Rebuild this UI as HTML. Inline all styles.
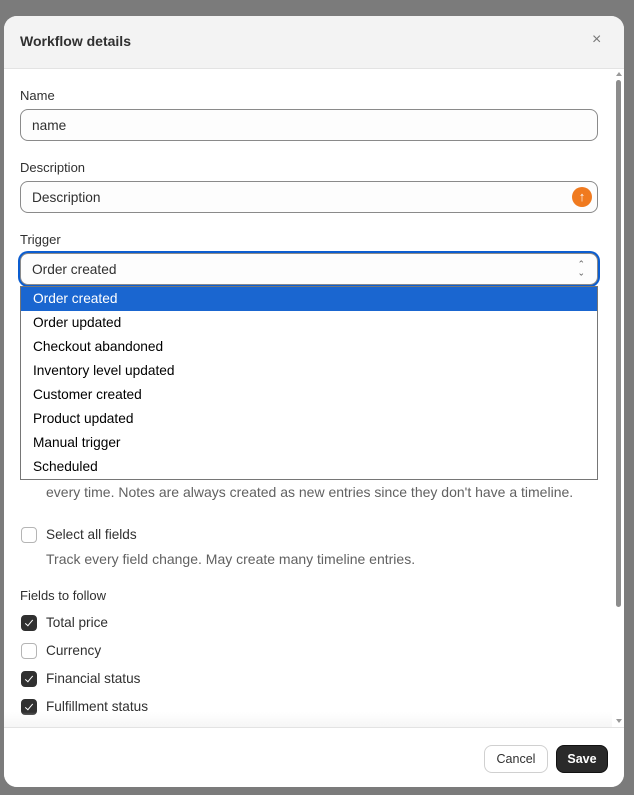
<!DOCTYPE html>
<html><head><style>
*{box-sizing:border-box;margin:0;padding:0}
body{width:634px;height:795px;background:#7b7b7b;font-family:"Liberation Sans",sans-serif;position:relative;overflow:hidden;font-size:13px;color:#303030}
.modal{position:absolute;left:4px;top:16px;width:620px;height:771px;background:#fff;border-radius:13px;overflow:hidden}
.hdr{height:53px;background:#f3f3f3;border-bottom:1px solid #e3e3e3;position:relative}
.hdr h1{position:absolute;left:16px;top:17px;font-size:14px;font-weight:bold;color:#303030}
.x{position:absolute;left:588px;top:15px;font-size:16px;color:#777}
.lbl{position:absolute;left:16px;font-size:13px;color:#303030}
.inp{position:absolute;left:16px;width:578px;height:32px;border:1px solid #8a8a8a;border-radius:8px;background:#fdfdfd;padding:8px 11px;font-size:13.7px}
.dd{position:absolute;left:16px;top:270px;width:578px;height:194px;border:1px solid #767676;background:#fff}
.dd div{height:24px;line-height:24px;padding-left:12px;font-size:13.7px;color:#000}
.dd .sel{background:#1a66d0;color:#fff}
.cb{position:absolute;left:17px;width:16px;height:16px;border:1px solid #b5b5b5;border-radius:4px;background:#fff}
.cb.on{background:#303030;border-color:#303030}
.cb.on::after{content:"";position:absolute;left:5px;top:2px;width:3px;height:7px;border:solid #fff;border-width:0 1.6px 1.6px 0;transform:rotate(40deg)}
.t{position:absolute;left:42px;font-size:13.6px;color:#303030}
.g{color:#616161;font-size:14px}
.foot{position:absolute;left:0;top:711px;width:620px;height:60px;border-top:1px solid #e3e3e3;background:#fff}
.fade{position:absolute;left:0;top:696px;width:608px;height:15px;background:linear-gradient(rgba(255,255,255,0),#f6f6f6)}
.btn{position:absolute;top:17px;height:28px;border-radius:8px;font-size:12.5px;line-height:26px;text-align:center}
.sb{position:absolute;left:610px;top:53px;width:10px;height:658px;background:#fff}
.thumb{position:absolute;left:2px;top:11px;width:5px;height:527px;background:#8c8c8c;border-radius:3px}
.ar{position:absolute;left:2px;width:0;height:0;border-left:3px solid transparent;border-right:3px solid transparent}
</style></head><body>
<div class="modal">
<div class="hdr"><h1>Workflow details</h1><div class="x">×</div></div>
<div class="lbl" style="top:72px">Name</div>
<div class="inp" style="top:93px">name</div>
<div class="lbl" style="top:144px">Description</div>
<div class="inp" style="top:165px">Description<span style="position:absolute;right:5px;top:5px;width:20px;height:20px;border-radius:50%;background:#f07a1f;color:#fff;font-weight:bold;text-align:center;line-height:20px;font-size:13px">↑</span></div>
<div class="lbl" style="top:216px">Trigger</div>
<div class="inp" style="top:237px;border:1px solid #8a8a8a;box-shadow:0 0 0 2px #0b5dd0">Order created<span style="position:absolute;right:12px;top:6px;font-size:9px;line-height:8px;color:#666">⌃<br><span style="display:inline-block;transform:scaleY(-1)">⌃</span></span></div>
<div class="dd">
<div class="sel">Order created</div><div>Order updated</div><div>Checkout abandoned</div><div>Inventory level updated</div><div>Customer created</div><div>Product updated</div><div>Manual trigger</div><div>Scheduled</div>
</div>
<div class="t g" style="top:468px">every time. Notes are always created as new entries since they don't have a timeline.</div>
<div class="cb" style="top:511px"></div><div class="t" style="top:511px">Select all fields</div>
<div class="t g" style="top:535px">Track every field change. May create many timeline entries.</div>
<div class="lbl" style="top:572px">Fields to follow</div>
<div class="cb on" style="top:599px"></div><div class="t" style="top:599px">Total price</div>
<div class="cb" style="top:627px"></div><div class="t" style="top:627px">Currency</div>
<div class="cb on" style="top:655px"></div><div class="t" style="top:655px">Financial status</div>
<div class="cb on" style="top:683px"></div><div class="t" style="top:683px">Fulfillment status</div>
<div class="fade"></div>
<div class="sb"><div class="ar" style="top:3px;border-bottom:4px solid #999"></div><div class="thumb"></div><div class="ar" style="top:650px;border-top:4px solid #999"></div></div>
<div class="foot">
<div class="btn" style="left:480px;width:64px;border:1px solid #d0d0d0;color:#303030">Cancel</div>
<div class="btn" style="left:552px;width:52px;background:#2a2a2a;color:#fff;font-weight:bold;border:1px solid #111">Save</div>
</div>
</div>
</body></html>
